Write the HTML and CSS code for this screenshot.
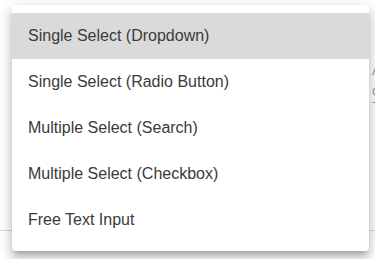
FILE: index.html
```html
<!DOCTYPE html>
<html>
<head>
<meta charset="utf-8">
<link rel="stylesheet" href="styles.css">
</head>
<body>
<div class="page">
  <div class="behind">
    <div class="frag frag-a">A</div>
    <div class="frag frag-b">C</div>
    <div class="frag frag-c">T</div>
    <div class="rule"></div>
  </div>
  <ul class="menu">
    <li class="item selected">Single Select (Dropdown)</li>
    <li class="item">Single Select (Radio Button)</li>
    <li class="item">Multiple Select (Search)</li>
    <li class="item">Multiple Select (Checkbox)</li>
    <li class="item">Free Text Input</li>
  </ul>
</div>
</body>
</html>
```
FILE: styles.css
```css
html, body {
  margin: 0;
  padding: 0;
  background: #ffffff;
}
.page {
  position: relative;
  width: 375px;
  height: 259px;
  overflow: hidden;
  background: #ffffff;
  font-family: "Liberation Sans", Arial, sans-serif;
}
.behind {
  position: absolute;
  inset: 0;
}
.frag {
  position: absolute;
  left: 372px;
  font-size: 13px;
  color: #9a9a9a;
  line-height: 1;
}
.frag-a { top: 64px; }
.frag-b { top: 85px; }
.frag-c { top: 100px; }
.rule {
  position: absolute;
  left: 0;
  right: 0;
  top: 230px;
  height: 1px;
  background: #d6d6d6;
}
.menu {
  position: absolute;
  left: 12px;
  top: 5px;
  width: 357px;
  margin: 0;
  padding: 8px 0;
  list-style: none;
  background: #ffffff;
  border-radius: 4px;
  box-shadow: 0px 5px 5px -3px rgba(0,0,0,0.2), 0px 8px 10px 1px rgba(0,0,0,0.14), 0px 3px 14px 2px rgba(0,0,0,0.12);
}
.item {
  display: flex;
  align-items: center;
  height: 46px;
  padding-left: 16px;
  font-size: 16px;
  color: #3a3a3a;
}
.item.selected {
  background: #dadada;
}
```
